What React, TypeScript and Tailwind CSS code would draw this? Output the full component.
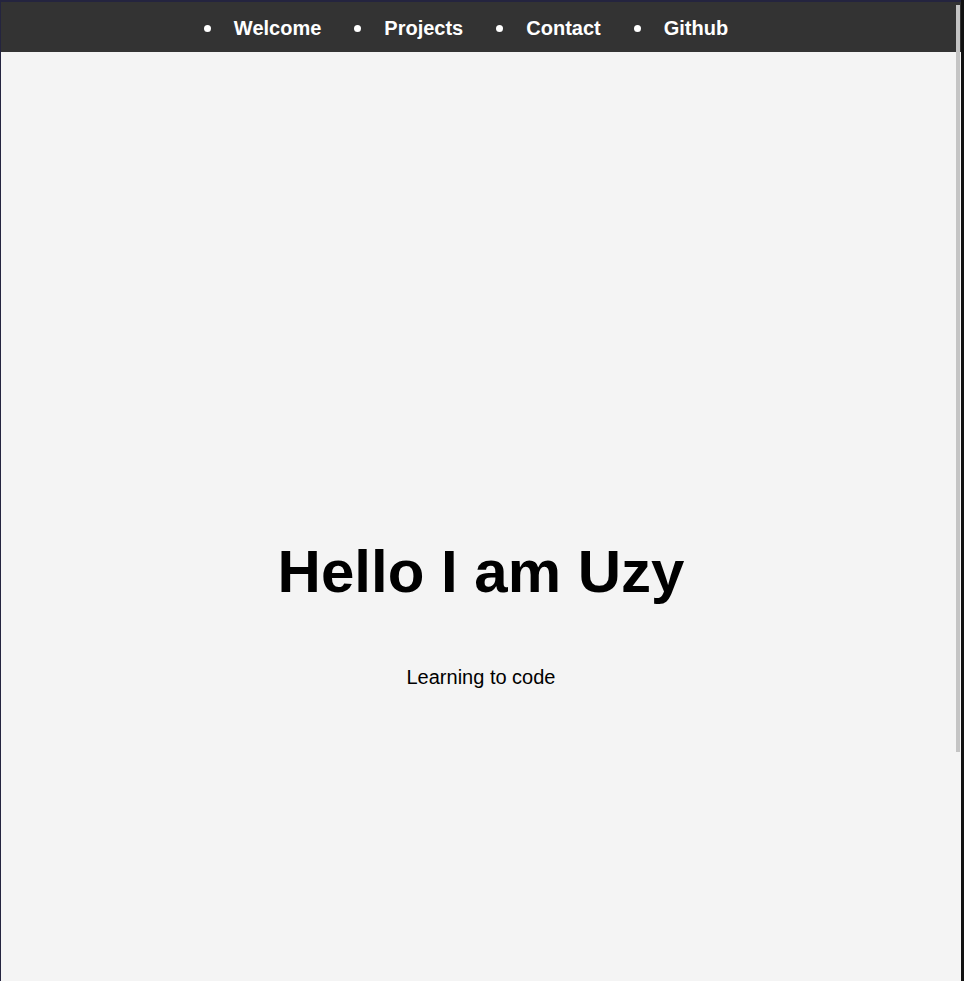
import React from "react";

const items = ["Welcome", "Projects", "Contact", "Github"];

export default function App() {
  return (
    <div
      className="flex h-[981px] w-[964px] overflow-hidden bg-[#111111]"
      style={{ fontFamily: '"Liberation Sans", Arial, sans-serif' }}
    >
      <div className="relative flex w-[961px] flex-col border-t-2 border-l border-[#24243f] bg-[#f4f4f4]">
        <nav className="flex h-[50px] items-center justify-center bg-[#333333] pt-[2px] pr-[30px]">
          <ul className="flex items-center">
            {items.map((t, i) => (
              <li
                key={t}
                className={`flex items-center text-[20px] font-bold leading-[24px] text-white ${i > 0 ? "ml-[33px]" : ""}`}
              >
                <span className="mr-[23px] inline-block h-[7px] w-[7px] rounded-full bg-white" />
                <span>{t}</span>
              </li>
            ))}
          </ul>
        </nav>
        <main className="flex flex-col items-center pt-[484px] text-black">
          <h1 className="text-[60px] font-bold leading-[72px]">Hello I am Uzy</h1>
          <p className="mt-[58px] text-[20px] leading-[23px]">Learning to code</p>
        </main>
        <div className="absolute right-[1px] top-[3px] h-[747px] w-[4px] bg-[#c4c4c4]" />
      </div>
    </div>
  );
}
